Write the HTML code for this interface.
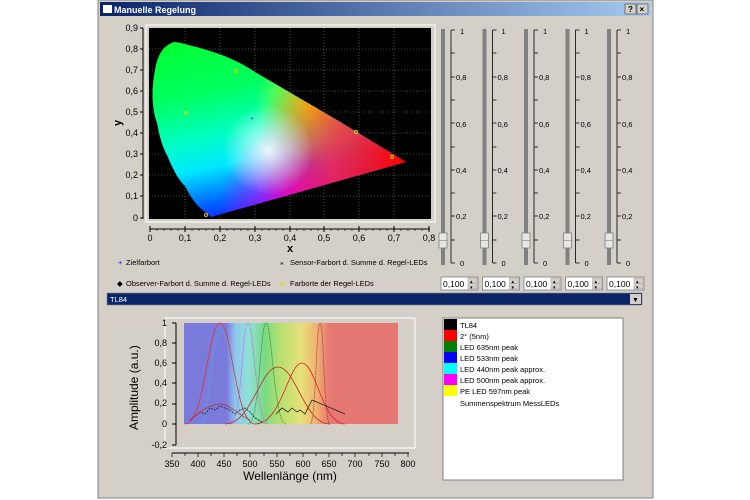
<!DOCTYPE html>
<html><head><meta charset="utf-8"><style>
html,body{margin:0;padding:0;background:#fff;width:750px;height:500px;overflow:hidden}
svg text{font-family:"Liberation Sans",sans-serif}
</style></head><body>
<svg width="750" height="500" viewBox="0 0 750 500" xmlns="http://www.w3.org/2000/svg">
<defs>
<linearGradient id="tb" x1="0" x2="1"><stop offset="0" stop-color="#0a246a"/><stop offset="1" stop-color="#a6caf0"/></linearGradient>
<linearGradient id="gb" x1="0" y1="0" x2="0.3" y2="1"><stop offset="0" stop-color="#00ff20"/><stop offset="0.35" stop-color="#00ff60"/><stop offset="0.55" stop-color="#00ffc0"/><stop offset="0.7" stop-color="#00e8ff"/><stop offset="0.87" stop-color="#0060ff"/><stop offset="1" stop-color="#2000ff"/></linearGradient>
<radialGradient id="rr" cx="406" cy="162" r="150" gradientUnits="userSpaceOnUse"><stop offset="0" stop-color="#ff0000"/><stop offset="0.5" stop-color="#ff2040" stop-opacity="0.8"/><stop offset="1" stop-color="#ff0000" stop-opacity="0"/></radialGradient>
<radialGradient id="mm" cx="300" cy="205" r="80" gradientUnits="userSpaceOnUse"><stop offset="0" stop-color="#ff00ff"/><stop offset="1" stop-color="#ff00ff" stop-opacity="0"/></radialGradient>
<radialGradient id="yy" cx="315" cy="105" r="60" gradientUnits="userSpaceOnUse"><stop offset="0" stop-color="#ffff00"/><stop offset="1" stop-color="#ffff00" stop-opacity="0"/></radialGradient>
<radialGradient id="ww" cx="268" cy="150" r="45" gradientUnits="userSpaceOnUse"><stop offset="0" stop-color="#fff" stop-opacity="0.9"/><stop offset="1" stop-color="#fff" stop-opacity="0"/></radialGradient>
<clipPath id="hs"><path d="M211,217 L406,162 L342,123 L255,72 C240,62 225,55 200,48 C185,44 178,42 174,42 C165,45 158,52 155,70 C151,90 152,110 157,123 C160,140 164,150 167,155 C173,170 180,182 185,186 C190,196 195,203 199,207 Z"/></clipPath>
<linearGradient id="sp" x1="0" x2="1"><stop offset="0" stop-color="#7b7bdc"/><stop offset="0.2" stop-color="#7b7bdc"/><stop offset="0.24" stop-color="#8fc8ee"/><stop offset="0.3" stop-color="#8fe0d8"/><stop offset="0.38" stop-color="#7ada82"/><stop offset="0.45" stop-color="#b8e070"/><stop offset="0.55" stop-color="#e8e07a"/><stop offset="0.62" stop-color="#f0b070"/><stop offset="0.67" stop-color="#e88070"/><stop offset="0.68" stop-color="#e57872"/><stop offset="1" stop-color="#e57872"/></linearGradient>
</defs>
<rect x="98" y="0" width="555" height="498" fill="#d4d0c8" stroke="#808080"/>
<rect x="100" y="2" width="551" height="14" fill="url(#tb)"/>
<rect x="103" y="5" width="9" height="8" fill="#fff"/>
<text x="114" y="13" font-size="9" font-weight="bold" fill="#fff">Manuelle Regelung</text>
<rect x="625" y="4" width="11" height="10" fill="#d4d0c8" stroke="#404040" stroke-width="0.6"/><text x="628" y="12" font-size="8" font-weight="bold">?</text>
<rect x="637" y="4" width="11" height="10" fill="#d4d0c8" stroke="#404040" stroke-width="0.6"/><text x="639.5" y="12" font-size="8" font-weight="bold">×</text>
<rect x="146" y="25" width="289" height="197" fill="none" stroke="#fff" stroke-width="1"/>
<rect x="149" y="28" width="282" height="191" fill="#000"/>
<g stroke="#888" stroke-dasharray="1,2" stroke-width="0.6">
<path d="M185,28V219M220,28V219M255,28V219M290,28V219M324,28V219M359,28V219M394,28V219"/>
<path d="M149,49H431M149,70H431M149,91H431M149,112H431M149,133H431M149,154H431M149,175H431M149,196H431"/>
</g>
<g clip-path="url(#hs)">
<rect x="140" y="30" width="280" height="200" fill="url(#gb)"/>
<rect x="140" y="30" width="280" height="200" fill="url(#mm)"/>
<rect x="140" y="30" width="280" height="200" fill="url(#yy)"/>
<rect x="140" y="30" width="280" height="200" fill="url(#rr)"/>
<rect x="140" y="30" width="280" height="200" fill="url(#ww)"/>
</g>
<g fill="none" stroke="#e8d000" stroke-width="1"><circle cx="186" cy="113" r="1.5"/><circle cx="236" cy="71" r="1.5"/><circle cx="356" cy="132" r="1.5"/><circle cx="392" cy="157" r="1.5"/><circle cx="206" cy="215" r="1.5"/></g>
<text x="250" y="121" font-size="7" fill="#2030ff">+</text>
<g font-size="9" fill="#000" text-anchor="end">
<text x="138" y="31">0,9</text><text x="138" y="52">0,8</text><text x="138" y="73">0,7</text><text x="138" y="94">0,6</text><text x="138" y="115">0,5</text><text x="138" y="136">0,4</text><text x="138" y="157">0,3</text><text x="138" y="178">0,2</text><text x="138" y="199">0,1</text><text x="138" y="221">0</text>
</g>
<path d="M143,28V219" stroke="#000"/>
<path d="M140,28H143M140,49H143M140,70H143M140,91H143M140,112H143M140,133H143M140,154H143M140,175H143M140,196H143M140,218H143" stroke="#000"/>
<text x="121" y="126" font-size="11" font-weight="bold" transform="rotate(-90 121 126)">y</text>
<path d="M150,229H430" stroke="#000"/>
<path d="M150,226V232M185,226V232M220,226V232M255,226V232M290,226V232M324,226V232M359,226V232M394,226V232M429,226V232" stroke="#000"/>
<path d="M157,229V231M164,229V231M171,229V231M178,229V231M192,229V231M199,229V231M206,229V231M213,229V231M227,229V231M234,229V231M241,229V231M248,229V231M262,229V231M269,229V231M276,229V231M283,229V231M297,229V231M304,229V231M311,229V231M318,229V231M331,229V231M338,229V231M345,229V231M352,229V231M366,229V231M373,229V231M380,229V231M387,229V231M401,229V231M408,229V231M415,229V231M422,229V231" stroke="#000" stroke-width="0.6"/>
<g font-size="9" text-anchor="middle"><text x="150" y="241">0</text><text x="185" y="241">0,1</text><text x="220" y="241">0,2</text><text x="255" y="241">0,3</text><text x="290" y="241">0,4</text><text x="324" y="241">0,5</text><text x="359" y="241">0,6</text><text x="394" y="241">0,7</text><text x="429" y="241">0,8</text></g>
<text x="287" y="252" font-size="11" font-weight="bold">x</text>
<g font-size="7.5"><text x="118" y="265" fill="#30f">+</text><text x="126" y="265">Zielfarbort</text>
<text x="280" y="265">⁎</text><text x="290" y="265">Sensor-Farbort d. Summe d. Regel-LEDs</text>
<text x="117" y="286">◆</text><text x="126" y="286">Observer-Farbort d. Summe d. Regel-LEDs</text>
<text x="280" y="286" fill="#dd0">●</text><text x="290" y="286">Farborte der Regel-LEDs</text></g>
<g id="s0">
<rect x="441" y="29" width="4" height="236" fill="#808080"/>
<path d="M451,30V263M451,30H455M451,53H455M451,77H455M451,100H455M451,123H455M451,147H455M451,170H455M451,193H455M451,216H455M451,240H455M451,263H455" stroke="#000" stroke-width="0.8" fill="none"/>
<g font-size="7.5"><text x="460" y="34">1</text><text x="456" y="80">0,8</text><text x="456" y="127">0,6</text><text x="456" y="173">0,4</text><text x="456" y="219">0,2</text><text x="460" y="266">0</text></g>
<rect x="439" y="233" width="8" height="15" fill="#e8e6e0" stroke="#808080" stroke-width="0.8"/><path d="M439,240.5H447" stroke="#808080" stroke-width="0.6"/>
<rect x="441" y="277" width="37" height="13" fill="#fff" stroke="#808080" stroke-width="0.8"/>
<text x="443" y="287" font-size="8.5">0,100</text>
<rect x="468" y="278" width="9" height="11" fill="#d4d0c8" stroke="#999" stroke-width="0.5"/><path d="M469,283.5H476" stroke="#888" stroke-width="0.5"/>
<text x="470" y="283" font-size="5">▴</text><text x="470" y="289" font-size="5">▾</text>
</g>
<use href="#s0" x="41.5"/><use href="#s0" x="83"/><use href="#s0" x="124.5"/><use href="#s0" x="166"/>
<rect x="107" y="293" width="535" height="12" fill="#0a246a" stroke="#808080" stroke-width="0.6"/>
<text x="110" y="302" font-size="7.5" fill="#fff">TL84</text>
<rect x="630" y="294" width="11" height="10" fill="#d4d0c8"/><text x="632" y="302" font-size="7">▼</text>
<rect x="165" y="318" width="250" height="130" fill="none" stroke="#fff"/>
<rect x="184" y="323" width="214" height="101" fill="url(#sp)"/>
<g fill="none" stroke-width="0.8">
<path d="M185,424 C205,424 208,323 220,323 C232,323 235,424 255,424" stroke="#e03030"/>
<path d="M225,424 C252,424 260,367 278,367 C296,367 304,424 330,424" stroke="#d02020"/>
<path d="M255,424 C282,424 288,363 302,363 C316,363 322,424 345,424" stroke="#e02020"/>
<path d="M230,424 C242,424 242,323 248,323 C254,323 256,424 268,424" stroke="#e040e0" stroke-dasharray="1,1"/>
<path d="M248,424 C260,424 260,323 266,323 C272,323 274,424 286,424" stroke="#207020" stroke-dasharray="1,1"/>
<path d="M310,424 C316,424 316,323 320,323 C324,323 324,424 330,424" stroke="#803030" stroke-dasharray="1,1"/>
<path d="M200,424 C212,424 206,345 222,330 C235,345 232,424 250,424" stroke="#40c0e0" stroke-dasharray="1,1"/>
<path d="M190,420 L200,412 L205,414 L210,408 L215,410 L220,406 L225,408 L230,410 L235,414 L240,410 L245,408 L250,412 L255,418 L262,422" stroke="#222" stroke-dasharray="2,1"/>
<path d="M276,414 L282,408 L288,412 L292,408 L297,412 L300,410 L305,414 L312,400 L345,414" stroke="#222"/>
<path d="M190,420 C200,412 210,404 220,404 C230,404 240,416 250,420" stroke="#c03030"/>
</g>
<path d="M176,323V445" stroke="#000"/>
<path d="M172,323H176M172,343H176M172,363H176M172,383H176M172,404H176M172,424H176M172,445H176" stroke="#000"/>
<g font-size="9" text-anchor="end"><text x="167" y="326">1</text><text x="167" y="346">0,8</text><text x="167" y="366">0,6</text><text x="167" y="386">0,4</text><text x="167" y="406">0,2</text><text x="167" y="427">0</text><text x="167" y="448">-0,2</text></g>
<text x="138" y="430" font-size="12" transform="rotate(-90 138 430)">Amplitude (a.u.)</text>
<path d="M172,453H409" stroke="#000"/>
<path d="M172,453V457M198,453V457M224,453V457M250,453V457M277,453V457M303,453V457M329,453V457M355,453V457M382,453V457M408,453V457M185,453V456M211,453V456M237,453V456M264,453V456M290,453V456M316,453V456M342,453V456M369,453V456M395,453V456" stroke="#000" stroke-width="0.7"/>
<g font-size="9" text-anchor="middle"><text x="172" y="467">350</text><text x="198" y="467">400</text><text x="224" y="467">450</text><text x="250" y="467">500</text><text x="277" y="467">550</text><text x="303" y="467">600</text><text x="329" y="467">650</text><text x="355" y="467">700</text><text x="382" y="467">750</text><text x="408" y="467">800</text></g>
<text x="290" y="480" font-size="12" text-anchor="middle">Wellenlänge (nm)</text>
<rect x="443" y="318" width="180" height="162" fill="#fff" stroke="#808080"/>
<g font-size="7.5">
<rect x="444" y="319" width="13" height="11" fill="#000"/><text x="460" y="328">TL84</text>
<rect x="444" y="330" width="13" height="11" fill="#f00"/><text x="460" y="339">2° (5nm)</text>
<rect x="444" y="341" width="13" height="11" fill="#008000"/><text x="460" y="350">LED 635nm peak</text>
<rect x="444" y="352" width="13" height="11" fill="#00f"/><text x="460" y="361">LED 533nm peak</text>
<rect x="444" y="363" width="13" height="11" fill="#0ff"/><text x="460" y="372">LED 440nm peak approx.</text>
<rect x="444" y="374" width="13" height="11" fill="#f0f"/><text x="460" y="383">LED 500nm peak approx.</text>
<rect x="444" y="385" width="13" height="11" fill="#ff0"/><text x="460" y="394">PE LED 597nm peak</text>
<text x="460" y="406">Summenspektrum MessLEDs</text>
</g>
</svg>
</body></html>
